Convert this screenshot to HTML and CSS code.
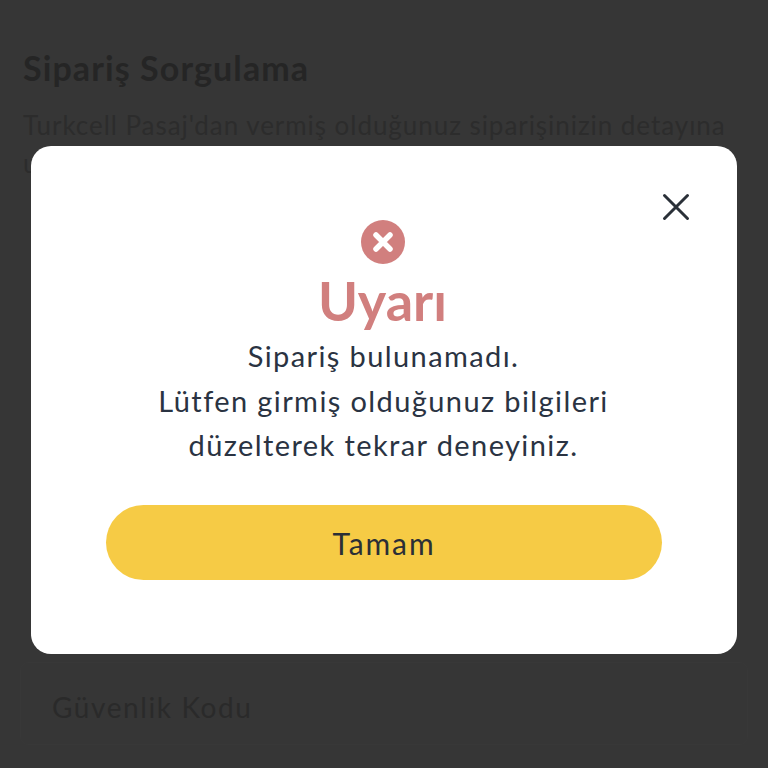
FILE: index.html
```html
<!DOCTYPE html>
<html lang="tr">
<head>
<meta charset="utf-8">
<title>Sipariş Sorgulama</title>
<link rel="stylesheet" href="styles.css">
</head>
<body>
<main class="page">
  <h1 class="page-title">Sipariş Sorgulama</h1>
  <p class="page-intro">Turkcell Pasaj'dan vermiş olduğunuz siparişinizin detayına<br>ulaşabilirsiniz.</p>
  <div class="field"><span class="field-label">Güvenlik Kodu</span></div>
</main>
<div class="overlay">
  <section class="modal">
    <button class="close" aria-label="Kapat">
      <svg width="28" height="28" viewBox="0 0 28 28"><path d="M2.5 2.5 L25.5 25.5 M25.5 2.5 L2.5 25.5" fill="none" stroke="#2a3038" stroke-width="3" stroke-linecap="round"/></svg>
    </button>
    <svg class="alert-icon" width="44" height="44" viewBox="0 0 44 44"><circle cx="22" cy="22" r="22" fill="#d17f7e"/><path d="M15 15 L29 29 M29 15 L15 29" fill="none" stroke="#fff" stroke-width="5.5" stroke-linecap="round"/></svg>
    <h2 class="modal-title">Uyarı</h2>
    <p class="modal-text">Sipariş bulunamadı.<br>Lütfen girmiş olduğunuz bilgileri<br>düzelterek tekrar deneyiniz.</p>
    <button class="confirm">Tamam</button>
  </section>
</div>
</body>
</html>
```
FILE: styles.css
```css
html, body {
  margin: 0;
  height: 100%;
}
body {
  background: #363636;
  font-family: "Lato", "Noto Sans", sans-serif;
  overflow: hidden;
}
.page {
  height: 768px;
  box-sizing: border-box;
  padding: 48px 20px 0;
  display: flex;
  flex-direction: column;
}
.page-title {
  margin: 0 0 0 3px;
  font-size: 34px;
  line-height: 40px;
  font-weight: 700;
  color: #252525;
  letter-spacing: 1.1px;
}
.page-intro {
  margin: 18px 0 0 3px;
  font-size: 26px;
  line-height: 38px;
  color: #2c2c2c;
  letter-spacing: 0.95px;
  white-space: nowrap;
}
.field {
  margin-top: auto;
  margin-bottom: 23px;
  height: 83px;
  box-sizing: border-box;
  display: flex;
  align-items: center;
  padding: 7px 0 0 31px;
  border: 1px solid #383838;
  border-radius: 8px;
}
.field-label {
  font-size: 28px;
  color: #2a2a2a;
  letter-spacing: 1.6px;
}
.overlay {
  position: fixed;
  inset: 0;
  display: flex;
  align-items: flex-start;
  justify-content: center;
  padding-top: 146px;
}
.modal {
  position: relative;
  width: 706px;
  height: 508px;
  box-sizing: border-box;
  padding-top: 74px;
  background: #fff;
  border-radius: 20px;
  display: flex;
  flex-direction: column;
  align-items: center;
}
.close {
  position: absolute;
  top: 47px;
  right: 47px;
  width: 28px;
  height: 28px;
  padding: 0;
  border: 0;
  background: none;
  display: flex;
}
.alert-icon {
  display: block;
  margin-left: -3px;
}
.modal-title {
  margin: 7px 0 0 -3px;
  font-size: 54px;
  line-height: 60px;
  font-weight: 700;
  color: #d17f7e;
}
.modal-text {
  margin: 3px 0 0 -1px;
  font-size: 29px;
  line-height: 44.5px;
  text-align: center;
  color: #2a3342;
  letter-spacing: 1.4px;
}
.confirm {
  margin: 37.5px 0 0;
  width: 556px;
  height: 75px;
  border: 0;
  border-radius: 38px;
  background: #f6cb45;
  font-family: inherit;
  font-size: 30px;
  letter-spacing: 1.9px;
  color: #2b2f36;
}
```
